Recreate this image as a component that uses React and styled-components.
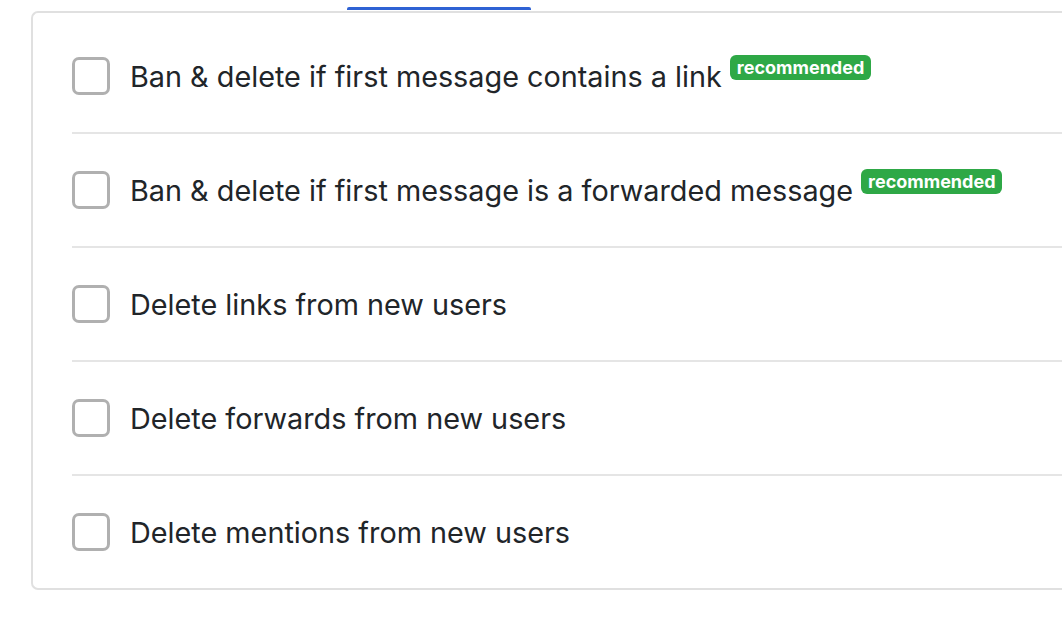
import React from 'react';
import styled, { createGlobalStyle } from 'styled-components';

const GlobalStyle = createGlobalStyle`
  html, body {
    margin: 0;
    padding: 0;
    background: #ffffff;
  }
  body {
    font-family: Inter, "Liberation Sans", Arial, sans-serif;
    color: #212529;
    overflow: hidden;
  }
`;

const Page = styled.div`
  width: 1062px;
  height: 626px;
  padding-left: 31px;
  box-sizing: border-box;
  overflow: hidden;
`;

const TabStrip = styled.div`
  height: 11px;
  display: flex;
  align-items: flex-end;
`;

const ActiveTab = styled.div`
  margin-left: 316px;
  width: 184px;
  height: 3px;
  margin-bottom: 1px;
  background: #2f62d4;
  border-radius: 2px 2px 0 0;
`;

const Card = styled.div`
  border: 2px solid #e0e0e0;
  border-right: none;
  border-radius: 7px 0 0 7px;
  padding: 7px 0 0 39px;
  box-sizing: border-box;
`;

const Row = styled.label`
  display: flex;
  align-items: center;
  height: ${({ $last }) => ($last ? '112px' : '114px')};
  box-sizing: border-box;
  border-bottom: ${({ $last }) => ($last ? 'none' : '2px solid #e5e5e5')};
`;

const Box = styled.span`
  width: 38px;
  height: 38px;
  box-sizing: border-box;
  border: 3px solid #b0b0b0;
  border-radius: 7px;
  flex-shrink: 0;
  margin-right: 20px;
`;

const Label = styled.span`
  font-size: 28.8px;
  line-height: 34px;
  color: #212529;
  display: flex;
  align-items: flex-start;
  gap: 8px;
  margin-top: 2px;
  white-space: nowrap;
`;

const Badge = styled.span`
  background: #2ea846;
  color: #ffffff;
  font-weight: 700;
  font-size: 18px;
  line-height: 25px;
  padding: 0 7px;
  border-radius: 6px;
  margin-top: -5px;
`;

const options = [
  { text: 'Ban & delete if first message contains a link', recommended: true },
  { text: 'Ban & delete if first message is a forwarded message', recommended: true },
  { text: 'Delete links from new users' },
  { text: 'Delete forwards from new users' },
  { text: 'Delete mentions from new users' },
];

const App = () => (
  <>
    <GlobalStyle />
    <Page>
      <TabStrip>
        <ActiveTab />
      </TabStrip>
      <Card>
        {options.map((opt, i) => (
          <Row key={opt.text} $last={i === options.length - 1}>
            <Box />
            <Label>
              {opt.text}
              {opt.recommended && <Badge>recommended</Badge>}
            </Label>
          </Row>
        ))}
      </Card>
    </Page>
  </>
);

export default App;
